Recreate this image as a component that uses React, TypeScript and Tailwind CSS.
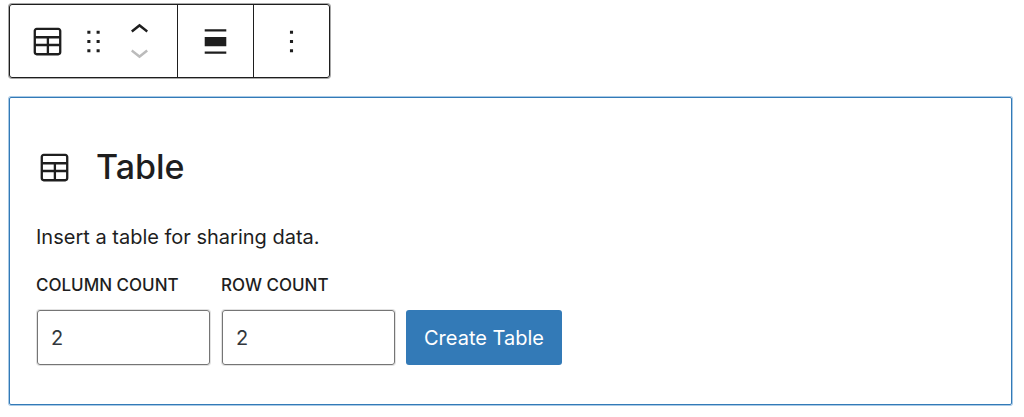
import { useState } from 'react';
import type { ReactNode } from 'react';

const icons = {
  table:
    'M19 3H5c-1.1 0-2 .9-2 2v14c0 1.1.9 2 2 2h14c1.1 0 2-.9 2-2V5c0-1.1-.9-2-2-2zM5 4.5h14c.3 0 .5.2.5.5v3.5h-15V5c0-.3.2-.5.5-.5zm8 5.5h6.5v3.5H13V10zm-1.5 3.5h-7V10h7v3.5zm-7 5.5v-4h7v4.5H5c-.3 0-.5-.2-.5-.5zm14.5.5h-6V15h6.5v4c0 .3-.2.5-.5.5z',
  drag: 'M8 7h2V5H8v2zm0 6h2v-2H8v2zm0 6h2v-2H8v2zm6-14v2h2V5h-2zm0 8h2v-2h-2v2zm0 6h2v-2h-2v2z',
  align: 'M19 5.5H5V4h14v1.5ZM19 20H5v-1.5h14V20ZM5 9h14v6H5V9Z',
  more: 'M13 19h-2v-2h2v2zm0-6h-2v-2h2v2zm0-6h-2V5h2v2z',
  up: 'M6.5 12.4L12 8l5.5 4.4-.9 1.2L12 10l-4.5 3.6-1-1.2z',
  down: 'M17.5 11.6L12 16l-5.5-4.4.9-1.2L12 14l4.5-3.6 1 1.2z',
};

function Icon({ path }: { path: string }) {
  return (
    <svg className="size-[37px] shrink-0" viewBox="0 0 24 24" fill="currentColor" aria-hidden="true">
      <path d={path} />
    </svg>
  );
}

function ToolbarGroup({ children }: { children: ReactNode }) {
  return <div className="flex items-center gap-[9px] px-[19px]">{children}</div>;
}

function ToolbarButton({ label, path }: { label: string; path: string }) {
  return (
    <button type="button" aria-label={label}>
      <Icon path={path} />
    </button>
  );
}

function MoverButton({ label, path, disabled }: { label: string; path: string; disabled?: boolean }) {
  return (
    <button type="button" aria-label={label} disabled={disabled} className="disabled:text-[#bbb]">
      <svg className="h-[22px] w-[37px]" viewBox="0 5 24 14" fill="currentColor" aria-hidden="true">
        <path d={path} />
      </svg>
    </button>
  );
}

interface CountFieldProps {
  id: string;
  label: string;
  value: string;
  onChange: (value: string) => void;
}

function CountField({ id, label, value, onChange }: CountFieldProps) {
  return (
    <div className="flex w-[175px] flex-col gap-[13px]">
      <label htmlFor={id} className="text-[17px] leading-6 font-medium whitespace-nowrap uppercase">
        {label}
      </label>
      <input
        id={id}
        type="text"
        inputMode="numeric"
        value={value}
        onChange={(e) => onChange(e.target.value)}
        className="mx-px h-[55px] rounded-[3px] border border-[#757575] px-[13px] text-xl text-[#32373c] shadow-[0_0_0_1px_#e2e2e2]"
      />
    </div>
  );
}

export default function App() {
  const [columns, setColumns] = useState('2');
  const [rows, setRows] = useState('2');

  return (
    <main className="bg-white pt-1 pr-3 pb-3 pl-[9px] font-['Inter',sans-serif] text-[#1e1e1e]">
      {/* Block toolbar */}
      <div
        role="toolbar"
        aria-label="Block tools"
        className="flex h-[74px] w-fit divide-x divide-[#1e1e1e] rounded-[3px] border border-[#1e1e1e] shadow-[0_0_0_1px_#a8a8a8]"
      >
        <ToolbarGroup>
          <ToolbarButton label="Table" path={icons.table} />
          <ToolbarButton label="Drag" path={icons.drag} />
          <div className="flex flex-col">
            <MoverButton label="Move up" path={icons.up} />
            <MoverButton label="Move down" path={icons.down} disabled />
          </div>
        </ToolbarGroup>
        <ToolbarGroup>
          <ToolbarButton label="Align" path={icons.align} />
        </ToolbarGroup>
        <ToolbarGroup>
          <ToolbarButton label="Options" path={icons.more} />
        </ToolbarGroup>
      </div>

      {/* Placeholder */}
      <section className="mt-[19px] rounded-[2px] border border-[#337ab7] px-[26px] pt-[43px] pb-[39px] shadow-[0_0_0_1px_#a9cae6]">
        <div className="flex items-center gap-[23px]">
          <Icon path={icons.table} />
          <h1 className="text-[34px] leading-[52px] font-medium">Table</h1>
        </div>
        <p className="mt-7 text-xl leading-8">Insert a table for sharing data.</p>
        <form className="mt-5 flex items-end gap-2.5" onSubmit={(e) => e.preventDefault()}>
          <CountField id="column-count" label="Column count" value={columns} onChange={setColumns} />
          <CountField id="row-count" label="Row count" value={rows} onChange={setRows} />
          <button type="submit" className="h-[55px] rounded-[3px] bg-[#337ab7] px-[18px] text-xl text-white">
            Create Table
          </button>
        </form>
      </section>
    </main>
  );
}
